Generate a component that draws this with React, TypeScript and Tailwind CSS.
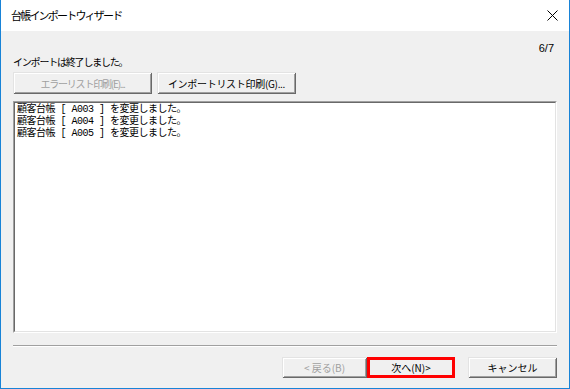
const jp = "font-['Noto_Sans_CJK_JP','Liberation_Sans',sans-serif]";

const lines = ["A003", "A004", "A005"];

const bevel =
  "shadow-[inset_1px_1px_0_#e3e3e3,inset_-1px_-1px_0_#696969,inset_2px_2px_0_#ffffff,inset_-2px_-2px_0_#a0a0a0]";

function Btn({
  label,
  width,
  disabled,
}: {
  label: string;
  width: string;
  disabled?: boolean;
}) {
  return (
    <div
      className={`${width} flex h-[21px] items-center justify-center bg-[#f0f0f0] text-[10px] leading-none ${bevel} ${
        disabled ? "text-[#a0a0a0]" : "text-black"
      }`}
    >
      {label}
    </div>
  );
}

export default function App() {
  return (
    <div
      className={`flex h-[389px] w-[570px] flex-col border-x border-b border-[#1883d7] ${jp} text-black`}
    >
      {/* title bar */}
      <div className="flex h-[31px] shrink-0 items-center justify-between bg-white pl-[10px] pr-[11px]">
        <span className="text-[11px] tracking-[-1.8px]">台帳インポートウィザード</span>
        <svg width="11" height="11" viewBox="0 0 11 11">
          <path d="M0.5 0.5 L10.5 10.5 M10.5 0.5 L0.5 10.5" stroke="#000" strokeWidth="1" />
        </svg>
      </div>

      <div className="flex flex-1 flex-col bg-[#f0f0f0] px-[12px]">
        <div className="mt-[11px] flex h-[12px] justify-end pr-[3px] font-['Liberation_Sans',sans-serif] text-[11px] leading-[12px]">
          6/7
        </div>
        <div className="mt-[2px] h-[12px] text-[10px] leading-[12px] tracking-[-1.2px]">
          インポートは終了しました。
        </div>

        <div className="mt-[4px] flex gap-[5px]">
          <div
            className={`flex h-[22px] w-[139px] items-center justify-center bg-[#f0f0f0] text-[10px] tracking-[-1.2px] text-[#a0a0a0] ${bevel}`}
          >
            エラーリスト印刷(E)...
          </div>
          <div
            className={`flex h-[22px] w-[139px] items-center justify-center bg-[#f0f0f0] text-[10px] tracking-[-0.3px] ${bevel}`}
          >
            インポートリスト印刷(G)...
          </div>
        </div>

        {/* list box */}
        <div className="mt-[7px] h-[232px] border border-b-white border-l-[#a0a0a0] border-r-white border-t-[#a0a0a0]">
          <div className="h-full border border-b-[#e3e3e3] border-l-[#696969] border-r-[#e3e3e3] border-t-[#696969] bg-white px-[2px] pt-[1px]">
            {lines.map((code) => (
              <div
                key={code}
                className="h-[12px] whitespace-pre font-['Liberation_Mono','Noto_Sans_CJK_JP',monospace] text-[10px] leading-[12px] tracking-[-0.5px]"
              >
                {`顧客台帳 [ ${code} ] を変更しました。`}
              </div>
            ))}
          </div>
        </div>

        {/* separator */}
        <div className="mt-[12px] border-b border-t border-b-white border-t-[#a0a0a0]" />

        <div className="mt-[10px] flex justify-end">
          <Btn label="< 戻る(B)" width="w-[85px]" disabled />
          <div className="relative w-[88px]">
            <Btn label="次へ(N)>" width="w-[88px]" />
            <div className="absolute inset-0 border-[3px] border-[#ff0000]" />
          </div>
          <div className="ml-[13px]">
            <Btn label="キャンセル" width="w-[89px]" />
          </div>
        </div>
      </div>
    </div>
  );
}
